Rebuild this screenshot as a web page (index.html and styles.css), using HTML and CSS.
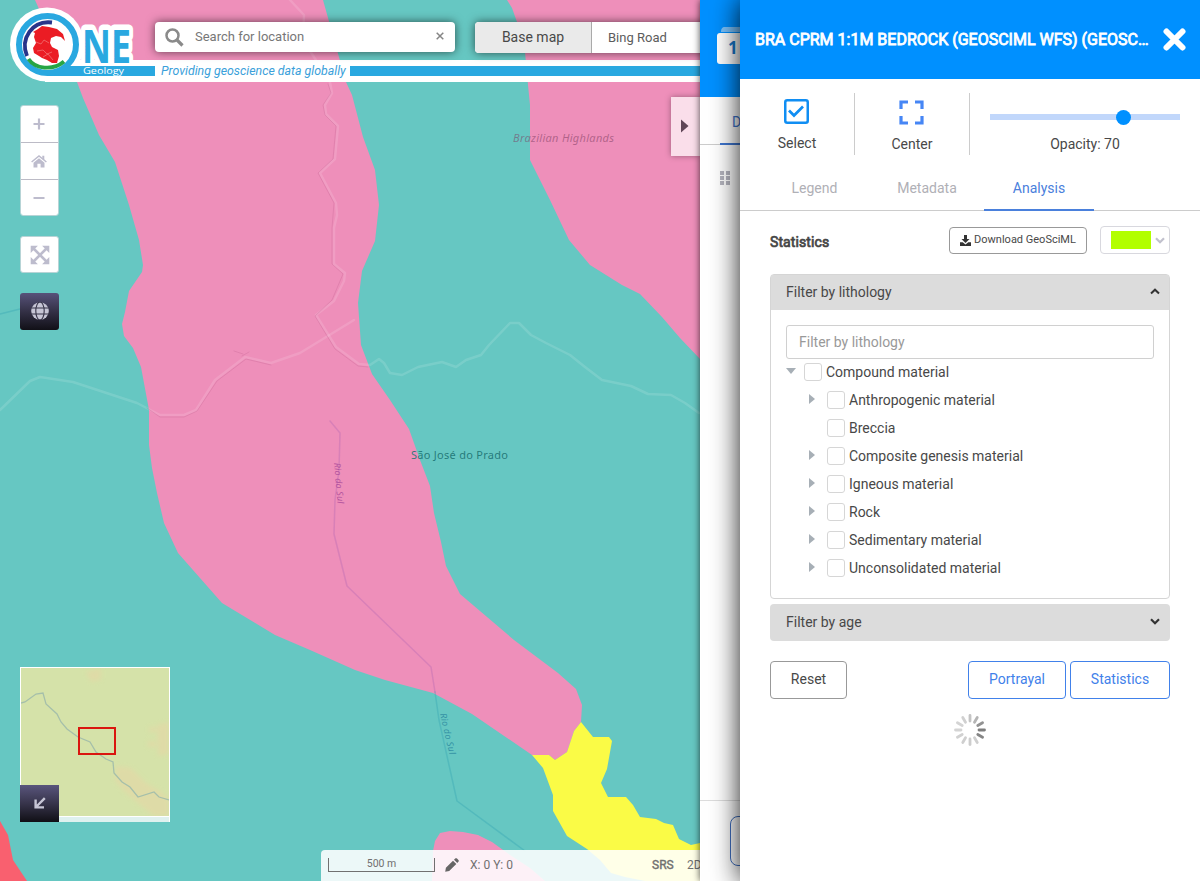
FILE: index.html
```html
<!DOCTYPE html>
<html lang="en">
<head>
<meta charset="utf-8">
<title>OneGeology Portal</title>
<link rel="stylesheet" href="styles.css">
</head>
<body>
<div class="app">
  <main class="map">
    <svg class="map-canvas" width="700" height="881" viewBox="0 0 700 881">
      <rect width="700" height="881" fill="#66c7c2"/>
      <path fill="#ee8fba" d="M35 0L51 36L68 62L77 82L83 98L99 135L115 162L129 205L139 240L143 265L142 272L129 291L125 312L122 324L124 336L133 348L141 367L149 410L149 445L152 468L157 493L164 523L178 553L222 603L275 635L310 650L355 670L385 680L433 693L472 714L532 755L549 755L555 760L567 752L574 731L581 722L582 705L576 689L558 673L514 640L460 594L446 566L441 542L434 513L430 486L420 460L409 429L390 400L372 374L361 345L358 303L362 271L375 241L379 205L375 170L363 137L352 95L346 82L337 50L323 0Z"/>
      <path fill="#ee8fba" d="M507 0L512 8L517 22L525 52L528 85L530 105L530 160L550 200L569 240L590 265L622 285L640 294L662 317L680 338L700 359V0Z"/>
      <path fill="#ee8fba" d="M432 881L433 851L435 841L440 833L450 831L463 832L478 835L492 842L510 855L530 868L545 881Z"/>
      <path fill="#fafb46" d="M581 722L593 737L609 737L612 741L607 769L601 783L608 797L626 797L633 805L640 817L656 819L664 823L673 825L679 839L691 845L700 843V881H645L625 877L611 873L600 860L587 849L567 836L553 811L553 795L543 768L532 755L549 755L555 760L567 752L574 731Z"/>
      <path fill="#f9606f" d="M0 821L8 835L13 860L27 881H0Z"/>
      <g fill="none" stroke-linejoin="round" stroke-linecap="round">
        <g stroke="#fff" stroke-opacity=".13" stroke-width="2.500">
          <path d="M290 0L304 15L303 40L330 82L332 93L325 105L326 114L338 126L335 159L320 173L336 203L337 215L334 228V264L345 273L344 281L334 301L316 315L336 347L359 364L370 365L379 359L384 363L390 373L402 375L418 367L442 362L456 367L466 360L481 355L489 345L510 323H519L531 335L546 343L570 355L585 367L602 380L631 386L648 394L671 395L685 403L699 413"/>
          <path d="M0 410L30 381L40 377L73 382L137 403L160 415H184L196 410L215 380L245 357L271 363L300 353L354 320"/>
        </g>
        <g stroke="#b95787" stroke-opacity=".25" stroke-width="1">
          <path d="M328 84L331 93L323 105L325 115L336 126L333 159L318 173L334 203L332 228V264L343 274L332 300L315 316L335 349L358 366L368 367M234 351L243 354M249 352L242 356M147 408L160 417H184L197 411L217 381L246 359L271 365"/>
        </g>
        <path stroke="#9655b0" stroke-opacity=".25" stroke-width="1.500" d="M330 421L340 433L339 470L335 500L334 534L347 586L431 667L435 692"/>
        <path stroke="#279aaf" stroke-opacity=".3" stroke-width="1.500" d="M435 692L439 720L457 801L525 851M0 314L20 309"/>
      </g>
      <text class="place region" x="513" y="142" textLength="101">Brazilian Highlands</text>
      <text class="place town" x="411" y="459" textLength="97">São José do Prado</text>
      <text class="place river-a" transform="translate(334 463) rotate(85)" textLength="41">Rio do Sul</text>
      <text class="place river-b" transform="translate(440 714) rotate(77)" textLength="42">Rio do Sul</text>
    </svg>

    <header class="brand">
      <div class="brand-line"><span class="tagline">Providing geoscience data globally</span><span class="rule"></span></div>
      <svg class="logo" width="160" height="84" viewBox="0 0 160 84">
        <circle cx="47" cy="44.500" r="37" fill="#fff"/>
        <path fill="#fff" d="M70 60h90v22H47z"/>
        <text class="ne" x="82" y="62.500" textLength="49" lengthAdjust="spacingAndGlyphs">NE</text>
        <path fill="#29a8e0" d="M62 66h93v10H47z"/>
        <circle cx="47.500" cy="44.500" r="28.500" fill="#fff" stroke="#29a8e0" stroke-width="6"/>
        <path fill="none" stroke="#28348a" stroke-width="3.800" d="M52 22.500C32 20 20 39 27 56"/>
        <path fill="none" stroke="#27a544" stroke-width="3.800" d="M28.500 59C35 69 53 71 64 61.500"/>
        <path fill="#eb1c24" d="M38 29L42 26L49 27L57 29L63 34L65 41L61 37L56 36L51 38L50 43L52 47L58 50L59 56L57 63L52 63L47 60L42 58L39 56L34 53L33 48L36 43L34 37L35 33L33 32Z"/>
        <path fill="none" stroke="#f3a09c" stroke-width=".5" d="M36 42l5 2 3-4 5 3M37 51l6-1 4 4 5-2M43 57l5-3 5 6"/>
        <text class="geology" x="83" y="73.500" textLength="41" lengthAdjust="spacingAndGlyphs">Geology</text>
      </svg>
    </header>

    <div class="toolbar">
      <div class="search">
        <svg width="19" height="19" viewBox="0 0 19 19"><circle cx="7.500" cy="7.500" r="6" fill="none" stroke="#8a8a8a" stroke-width="2.500"/><path d="M12 12l5.500 5.500" stroke="#8a8a8a" stroke-width="3.200"/></svg>
        <span class="search-text">Search for location</span>
        <svg class="clear" width="8" height="8" viewBox="0 0 8 8"><path d="M.7.700l6.600 6.600M7.300.700L.7 7.300" stroke="#858585" stroke-width="1.500"/></svg>
      </div>
      <div class="basemap"><span class="basemap-label">Base map</span><span class="basemap-value">Bing Road</span></div>
    </div>

    <nav class="controls">
      <div class="zoom-group">
        <button class="ctl"><svg width="12" height="12" viewBox="0 0 12 12"><path d="M6 .5v11M.5 6h11" stroke="#bdbccd" stroke-width="2.200"/></svg></button>
        <button class="ctl"><svg width="16" height="13" viewBox="0 0 16 13"><path d="M.6 7L8 1l7.400 6" fill="none" stroke="#bdbccd" stroke-width="1.500"/><path fill="#bdbccd" d="M11.300.800h2V5l-2-1.700zM8 3.300l5.500 4.500V12.600H9.600V8.800H6.400v3.800H2.500V7.800z"/></svg></button>
        <button class="ctl"><svg width="12" height="4" viewBox="0 0 12 4"><path d="M.5 2h11" stroke="#bdbccd" stroke-width="2.200"/></svg></button>
      </div>
      <button class="ctl single"><svg width="20" height="20" viewBox="0 0 20 20"><path d="M3 3l14 14M17 3L3 17" stroke="#bdbccd" stroke-width="2.600"/><path fill="#bdbccd" d="M.7.700h7.200L.7 7.900zM19.300.700v7.200L12.100.700zM.7 19.300v-7.200l7.200 7.200zM19.300 19.300h-7.200l7.200-7.200z"/></svg></button>
      <button class="ctl dark"><svg width="18" height="18" viewBox="0 0 18 18"><circle cx="9" cy="9" r="8.800" fill="#c6c5d5"/><g fill="none" stroke="#353246" stroke-width="1.100"><ellipse cx="9" cy="9" rx="4.200" ry="9"/><path d="M0 6h18M0 12h18"/></g></svg></button>
    </nav>

    <button class="drawer-toggle"><svg width="8" height="14" viewBox="0 0 8 14"><path fill="#604657" d="M0 0.500L7.500 7L0 13.500z"/></svg></button>

    <section class="overview">
      <svg width="148" height="148" viewBox="0 0 148 148">
        <defs><filter id="soft"><feGaussianBlur stdDeviation="2"/></filter></defs>
        <rect width="148" height="148" fill="#d5e2a9"/>
        <g fill="#e4d8a6" opacity=".65" filter="url(#soft)"><path d="M95 98l15 2 15 15 14 8 9 8v17h-15l-16-13-15-13-8-10z"/><path d="M136 57l12-3v32l-11 2zM65 4l15-4v12l-10 2zM128 59h7v5h-7zM127 73h8v6h-8z"/></g>
        <path fill="none" stroke="#a5bfaa" stroke-width="1.300" d="M0 35L4 34L15 26L22 25L25 36L36 46L40 54L46 61L57 69L69 74L75 84L85 91L92 94L93 105L101 114L109 119L117 129L133 124L138 129L148 132"/>
        <rect x="58" y="60" width="36" height="26" fill="none" stroke="#da160f" stroke-width="2"/>
      </svg>
      <button class="collapse"><svg width="12" height="12" viewBox="0 0 12 12"><path d="M10.800 1.200L2 10M1.600 2.500V10.400H10" fill="none" stroke="#c6c5d5" stroke-width="2.400"/></svg></button>
    </section>

    <footer class="status">
      <span class="scale">500 m</span>
      <svg class="pencil" width="14" height="14" viewBox="0 0 14 14"><path fill="#666" d="M.2 13.800l.7-4L8 2.700l3.300 3.300-7.100 7.100zM9 1.700L10.200.6c.6-.6 1.200-.6 1.800 0l1.400 1.400c.6.600.6 1.200 0 1.800L12.300 5z"/></svg>
      <span class="coords">X: 0 Y: 0</span>
      <span class="srs">SRS</span>
      <span class="mode">2D</span>
    </footer>
  </main>

  <aside class="layers">
    <div class="layers-head"><svg width="30" height="40" viewBox="0 0 30 40"><path fill="#7cc3fc" d="M8 0h22v5H4c0-3 1-5 4-5z"/><rect y="6" width="40" height="31" rx="3" fill="#fff"/><text class="count" x="11" y="27">1</text></svg></div>
    <div class="layers-tabs"><span>Data</span></div>
    <div class="layers-body"><svg width="11" height="14" viewBox="0 0 11 14"><path fill="#b4b4be" d="M0 0h4v4H0zM6 0h4v4H6zM0 5h4v4H0zM6 5h4v4H6zM0 10h4v4H0zM6 10h4v4H6z"/></svg></div>
    <div class="layers-foot"><span></span></div>
  </aside>

  <aside class="detail">
    <header class="detail-head">
      <h1>BRA CPRM 1:1M BEDROCK (GEOSCIML WFS) (GEOSC…</h1>
      <svg width="23" height="23" viewBox="0 0 23 23"><path d="M3.500 3.500l16 16M19.500 3.500l-16 16" stroke="#fff" stroke-width="6" stroke-linecap="round"/></svg>
    </header>

    <div class="actions">
      <div class="action select">
        <svg width="25" height="25" viewBox="0 0 25 25"><rect x="1.250" y="1.250" width="22.500" height="22.500" rx="2" fill="none" stroke="#108ef3" stroke-width="2.500"/><path d="M5 11.500l5 5L19 7.500" fill="none" stroke="#108ef3" stroke-width="2.700"/></svg>
        <span>Select</span>
      </div>
      <div class="action">
        <svg width="25" height="25" viewBox="0 0 25 25"><path d="M2 9V2h7M16 2h7v7M23 16v7h-7M9 23H2v-7" fill="none" stroke="#4686f5" stroke-width="3.200"/></svg>
        <span>Center</span>
      </div>
      <div class="opacity"><div class="track"><i class="thumb"></i></div><span>Opacity: 70</span></div>
    </div>

    <nav class="tabs"><span class="tab">Legend</span><span class="tab metadata">Metadata</span><span class="tab active">Analysis</span></nav>

    <div class="content">
      <div class="stats-row">
        <h2>Statistics</h2>
        <button class="download"><svg width="11" height="11" viewBox="0 0 11 11"><path fill="#333" d="M4 0h3v4h2.500L5.500 8 1.500 4H4zM0 7.300h2.700L5.500 9.500 8.300 7.300H11V11H0z"/></svg>Download GeoSciML</button>
        <div class="swatch"><i></i><svg width="10" height="7" viewBox="0 0 10 7"><path d="M1 1.300l4 4 4-4" fill="none" stroke="#c1c1cd" stroke-width="2.200"/></svg></div>
      </div>

      <section class="filter">
        <div class="filter-head"><span>Filter by lithology</span><svg width="10" height="7" viewBox="0 0 10 7"><path d="M1 5.500L5 1.700l4 3.800" fill="none" stroke="#333" stroke-width="2"/></svg></div>
        <div class="filter-body">
          <div class="field">Filter by lithology</div>
          <ul class="tree">
            <li class="root"><i class="arrow down"></i><i class="box"></i>Compound material</li>
            <li><i class="arrow"></i><i class="box"></i>Anthropogenic material</li>
            <li><i class="arrow none"></i><i class="box"></i>Breccia</li>
            <li><i class="arrow"></i><i class="box"></i>Composite genesis material</li>
            <li><i class="arrow"></i><i class="box"></i>Igneous material</li>
            <li><i class="arrow"></i><i class="box"></i>Rock</li>
            <li><i class="arrow"></i><i class="box"></i>Sedimentary material</li>
            <li><i class="arrow"></i><i class="box"></i>Unconsolidated material</li>
          </ul>
        </div>
      </section>
      <div class="filter-head age"><span>Filter by age</span><svg width="10" height="7" viewBox="0 0 10 7"><path d="M1 1.300l4 3.900 4-3.900" fill="none" stroke="#333" stroke-width="2.200"/></svg></div>

      <div class="buttons">
        <button class="btn reset">Reset</button>
        <button class="btn primary portrayal">Portrayal</button>
        <button class="btn primary statistics">Statistics</button>
      </div>

      <svg class="spinner" width="32" height="32" viewBox="-16 -16 32 32" stroke-width="2.800" stroke-linecap="round">
        <path d="M0-9v-5.500" stroke="#c4c4c4"/>
        <path d="M0-9v-5.500" stroke="#b4b4b4" transform="rotate(30)"/>
        <path d="M0-9v-5.500" stroke="#929292" transform="rotate(60)"/>
        <path d="M0-9v-5.500" stroke="#7d7d7d" transform="rotate(90)"/>
        <path d="M0-9v-5.500" stroke="#858585" transform="rotate(120)"/>
        <path d="M0-9v-5.500" stroke="#cfcfcf" transform="rotate(150)"/>
        <path d="M0-9v-5.500" stroke="#cdcdcd" transform="rotate(180)"/>
        <path d="M0-9v-5.500" stroke="#cfcfcf" transform="rotate(210)"/>
        <path d="M0-9v-5.500" stroke="#d1d1d1" transform="rotate(240)"/>
        <path d="M0-9v-5.500" stroke="#d4d4d4" transform="rotate(270)"/>
        <path d="M0-9v-5.500" stroke="#d4d4d4" transform="rotate(300)"/>
        <path d="M0-9v-5.500" stroke="#d0d0d0" transform="rotate(330)"/>
      </svg>
    </div>
  </aside>
</div>
</body>
</html>
```
FILE: styles.css
```css
* { box-sizing: border-box; }
body { margin: 0; font: 14px/20px Roboto, "Liberation Sans", sans-serif; color: #484848; background: #fff; }
svg { display: block; flex: none; }
button { font: inherit; color: inherit; margin: 0; padding: 0; border: 0; background: #fff; display: flex; align-items: center; justify-content: center; }
h1, h2, ul { margin: 0; padding: 0; }
.app { display: flex; width: 1200px; height: 881px; overflow: hidden; }

/* Map */
.map { position: relative; width: 700px; flex: none; overflow: hidden; }
.map-canvas { position: absolute; inset: 0; }
.place { font-family: "Noto Sans", sans-serif; font-size: 11px; }
.region { font-size: 11px; font-style: italic; fill: #7d3c60; fill-opacity: .55; }
.town { fill: #1c7373; fill-opacity: .9; }
.river-a { font-size: 9px; font-style: italic; fill: #a03f94; fill-opacity: .75; }
.river-b { font-size: 9px; font-style: italic; fill: #23809a; fill-opacity: .75; }

.brand { position: absolute; left: 0; top: 0; width: 700px; height: 84px; display: flex; align-items: flex-end; }
.brand-line { display: flex; align-items: center; width: 655px; height: 22px; margin: 0 0 2px 45px; padding-left: 110px; background: #fff; }
.tagline { width: 195px; padding-left: 6px; font-size: 12.350px; font-style: italic; color: #3aa0da; white-space: nowrap; }
.rule { flex: 1; height: 10px; background: #29a8e0; }
.logo { position: absolute; left: 0; top: 0; }
.ne { font: 700 47px "Open Sans", sans-serif; fill: #29a8e0; stroke: #fff; stroke-width: 11px; stroke-linejoin: round; paint-order: stroke; }
.geology { font: 9px "Open Sans", sans-serif; fill: #fff; }

.toolbar { position: absolute; left: 155px; top: 22px; display: flex; gap: 20px; }
.search { display: flex; align-items: center; width: 300px; height: 30px; padding: 0 11px 0 10px; background: #fff; border-radius: 4px; box-shadow: 0 0 10px rgba(0,0,0,.6); }
.search-text { flex: 1; margin-left: 11px; font-size: 13px; color: #777; }
.clear { margin-top: -2px; }
.basemap { display: flex; width: 260px; height: 31px; border-radius: 4px; background: #fff; box-shadow: 0 0 10px rgba(0,0,0,.6); overflow: hidden; }
.basemap-label { width: 117px; line-height: 30px; text-align: center; background: #eaeaea; border-right: 1px solid #aaa; }
.basemap-value { padding-left: 16px; font-size: 13px; line-height: 31px; color: #5c5c5c; }

.controls { position: absolute; left: 20px; top: 105px; width: 39px; display: flex; flex-direction: column; gap: 20px; }
.zoom-group { display: flex; flex-direction: column; border: 1px solid #b7d4d6; border-radius: 3px; overflow: hidden; }
.ctl { height: 36px; }
.zoom-group .ctl { padding-right: 1px; }
.zoom-group .ctl + .ctl { height: 37px; border-top: 1px solid #bcbbc6; }
.zoom-group .ctl:last-child { height: 36px; }
.single { height: 37px; border: 1px solid #b7d4d6; border-radius: 3px; }
.dark { height: 37px; padding-bottom: 1px; border-radius: 3px; background: linear-gradient(#57527a, #37344b 45%, #111017); }

.drawer-toggle { position: absolute; right: 0; top: 97px; width: 29px; height: 59px; padding: 0 2px 1px 0; background: rgba(255,255,255,.7); box-shadow: 0 0 6px rgba(0,0,0,.35); }

.overview { position: absolute; left: 20px; top: 667px; width: 150px; height: 155px; border: 1px solid #fff; border-bottom: 0; background: #dff1ef; }
.overview > svg { border-bottom: 1px solid #fff; height: 149px; }
.collapse { position: absolute; left: -1px; bottom: 0; width: 39px; height: 37px; padding-bottom: 1px; background: linear-gradient(#59557c, #37344b 50%, #100f15); }

.status { position: absolute; left: 321px; bottom: 0; width: 379px; height: 31px; display: flex; align-items: center; padding-left: 7px; padding-bottom: 2px; background: rgba(255,255,255,.88); border-radius: 4px 0 0 0; font-size: 12px; color: #707070; white-space: nowrap; overflow: hidden; }
.scale { width: 107px; height: 14px; flex: none; border: 1px solid #707070; border-top: 0; text-align: center; font-size: 10.500px; line-height: 12px; }
.pencil { margin-left: 10px; }
.coords { width: 182px; flex: none; margin-left: 11px; font-size: 12px; }
.srs { width: 35px; flex: none; -webkit-text-stroke: .4px #707070; }

/* Layer list */
.layers { position: relative; width: 40px; flex: none; display: flex; flex-direction: column; background: #fff; box-shadow: 0 0 7px rgba(0,0,0,.7); }
.layers-head { height: 97px; padding: 27px 0 0 17px; background: #0090ff; overflow: hidden; }
.count { font: 700 17px "Open Sans", sans-serif; fill: #1679cc; }
.layers-tabs { height: 48px; padding-left: 20px; border-bottom: 1px solid #ccc; }
.layers-tabs span { display: block; width: 60px; height: 48px; padding-left: 12px; line-height: 50px; border-bottom: 2px solid #3f76d0; color: #3f76d0; }
.layers-body { flex: 1; padding: 26px 0 0 20px; }
.layers-foot { height: 81px; padding: 15px 0 0 30px; border-top: 1px solid #ddd; overflow: hidden; }
.layers-foot span { display: block; width: 80px; height: 50px; border: 1px solid #3f6fc0; border-radius: 8px; }

/* Layer detail */
.detail { position: relative; width: 460px; flex: none; background: #fff; box-shadow: 0 0 26px rgba(0,0,0,.9); }
.detail-head { display: flex; align-items: center; justify-content: space-between; height: 79px; padding: 0 14px 0 15px; background: #0090ff; color: #fff; }
h1 { font-size: 16px; font-weight: 400; -webkit-text-stroke: .8px #fff; white-space: nowrap; }
.actions { display: flex; height: 62px; margin-top: 14px; }
.action { display: flex; flex-direction: column; align-items: center; width: 115px; padding-top: 7px; gap: 9px; border-right: 1px solid #ccc; }
.action.select { padding-top: 6px; }
.action svg { margin-right: 2px; }
.opacity { display: flex; flex-direction: column; align-items: center; flex: 1; padding: 21px 20px 0; gap: 14px; }
.track { width: 190px; height: 6px; padding-left: 126px; background: #c1d7fb; }
.thumb { display: block; width: 15px; height: 15px; margin-top: -4px; border-radius: 50%; background: #0090ff; }
.tabs { display: flex; height: 56px; padding: 0 0 0 17px; border-bottom: 1px solid #ccc; color: #b0b0b6; }
.tab { width: 115px; padding-top: 23px; text-align: center; }
.tab.metadata { width: 112px; padding-right: 2px; }
.tab.active { width: 110px; height: 56px; color: #4a80dc; border-bottom: 2px solid #4a80dc; }

.content { display: flex; flex-direction: column; padding: 14px 30px 0; }
.stats-row { display: flex; align-items: center; height: 30px; }
h2 { flex: 1; padding-top: 3px; font-size: 14px; font-weight: 400; letter-spacing: .1px; -webkit-text-stroke: .7px #444; }
.download { gap: 3px; width: 138px; height: 27px; border: 1px solid #999; border-radius: 4px; font-size: 11px; }
.swatch { display: flex; align-items: center; gap: 4px; width: 70px; height: 28px; margin-left: 13px; padding-left: 10px; border: 1px solid #d8d8de; border-radius: 4px; }
.swatch i { width: 40px; height: 18px; background: #b2ff00; }

.filter { height: 325px; margin-top: 19px; border: 1px solid #d5d5d5; border-radius: 4px; }
.filter-head { display: flex; align-items: center; justify-content: space-between; height: 35px; padding: 0 9px 2px 15px; background: #dcdcdc; }
.filter-body { padding: 15px 15px 0; }
.field { height: 34px; padding-left: 12px; line-height: 32px; border: 1px solid #d0d0d0; border-radius: 3px; color: #999; }
.tree { list-style: none; margin-top: -1px; }
.tree li { display: flex; align-items: center; height: 28px; padding-left: 23px; white-space: nowrap; }
.tree .root { padding-left: 0; }
.box { width: 18px; height: 18px; margin-right: 4px; border: 1px solid #d6d6d6; border-radius: 3px; }
.arrow { width: 6px; height: 10px; margin: -2px 12px 0 0; background: #a7afb6; clip-path: polygon(0 0, 100% 50%, 0 100%); }
.arrow.down { width: 10px; height: 6px; margin-right: 8px; clip-path: polygon(0 0, 100% 0, 50% 100%); }
.arrow.none { visibility: hidden; }
.age { height: 37px; margin-top: 5px; padding: 0 10px 2px 16px; border-radius: 4px; }
.buttons { display: flex; gap: 4px; margin-top: 20px; }
.btn { height: 38px; padding-bottom: 2px; border: 1px solid #999; border-radius: 4px; }
.reset { width: 77px; margin-right: auto; }
.primary { color: #4181ea; border-color: #4181ea; }
.portrayal { width: 98px; }
.statistics { width: 100px; }
.spinner { align-self: center; margin-top: 15px; }
```
